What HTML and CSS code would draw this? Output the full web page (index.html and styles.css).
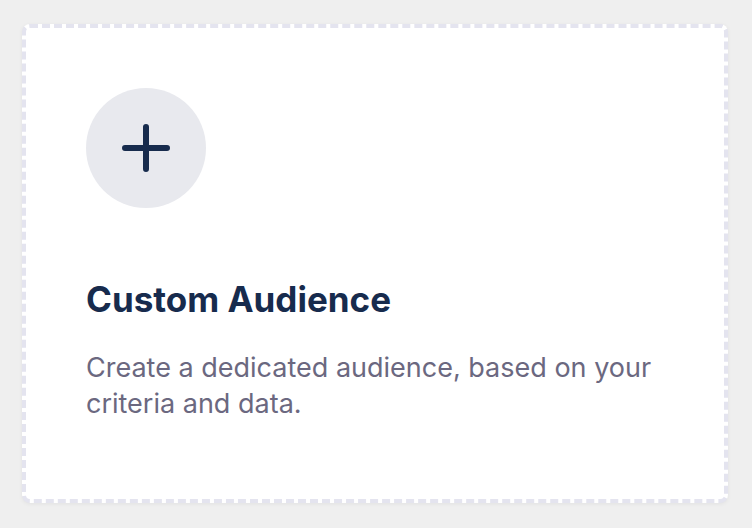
FILE: index.html
```html
<!DOCTYPE html>
<html lang="en">
<head>
    <meta charset="UTF-8">
    <meta name="viewport" content="width=device-width, initial-scale=1.0">
    <title>Custom Audience</title>
    <link rel="stylesheet" href="styles.css">
</head>
<body>
    <div class="option-card">
        <div class="option-icon">
            <svg width="48" height="48" viewBox="0 0 48 48" aria-hidden="true">
                <path d="M24 3 V45 M3 24 H45" stroke="#172b4d" stroke-width="6" stroke-linecap="round" fill="none"/>
            </svg>
        </div>
        <h2 class="option-title">Custom Audience</h2>
        <p class="option-text">Create a dedicated audience, based on your criteria and data.</p>
    </div>
</body>
</html>
```

FILE: styles.css
```css
body, html {
    margin: 0;
    padding: 0;
    height: 100%;
    background-color: #efefef;
    font-family: Inter, 'Noto Sans', sans-serif;
}

body {
    padding: 24px 24px 25px 22px;
    box-sizing: border-box;
    display: flex;
}

.option-card {
    flex: 1;
    background-color: #ffffff;
    border: 4px dashed #e4e4ef;
    border-radius: 8px;
    padding: 60px;
    box-shadow: 0 1px 4px rgba(0, 0, 0, 0.06);
}

.option-icon {
    width: 120px;
    height: 120px;
    border-radius: 50%;
    background-color: #e8e9ee;
    display: flex;
    align-items: center;
    justify-content: center;
}

.option-title {
    margin: 70px 0 0;
    font-size: 35px;
    line-height: 1.25;
    font-weight: 700;
    color: #172b4d;
}

.option-text {
    margin: 28px 0 0;
    font-size: 27px;
    line-height: 36px;
    color: #6b6880;
}
```
